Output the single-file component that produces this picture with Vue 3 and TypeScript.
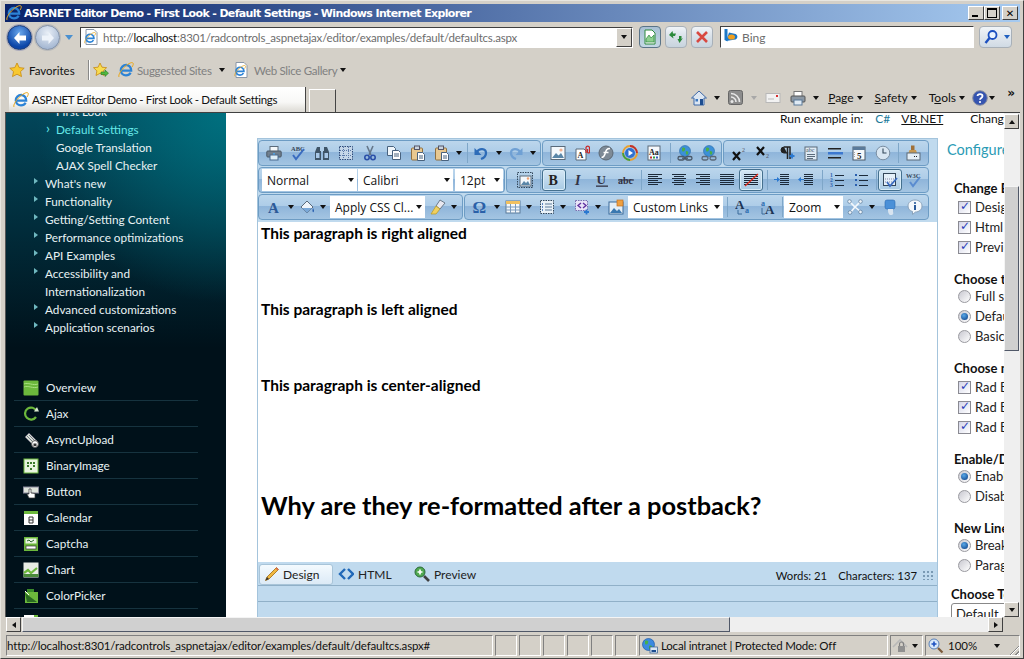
<script setup lang="ts">
// IE8 window showing the RadEditor demo page. Toolbars and lists are data, icons are small inline svgs.
interface Item { i?: string; w?: number; arrow?: boolean; sep?: boolean; gap?: boolean; sel?: string; active?: boolean }
interface Group { w: number; items: Item[] }

const btn = (i: string, w = 24, active = false): Item => ({ i, w, active })
const arrow = (w = 10): Item => ({ arrow: true, w })
const sep = (w: number): Item => ({ sep: true, w })
const gap = (w: number): Item => ({ gap: true, w })
const sel = (text: string, w: number): Item => ({ sel: text, w })

const rows: Group[][] = [
  [
    { w: 283, items: [btn('print'), btn('spell'), btn('find'), btn('selall'), btn('cut'), btn('copy'), btn('paste'), btn('paste'), arrow(), sep(5), btn('undo'), arrow(11), btn('redo'), arrow()] },
    { w: 180, items: [btn('image'), btn('flashdoc'), btn('flash'), btn('media'), btn('docaa'), sep(7), btn('link'), btn('unlink')] },
    { w: 206, items: [btn('sup'), btn('sub'), btn('para'), btn('abcdoc'), btn('hr'), btn('cal'), btn('clock'), sep(6), btn('paint')] },
  ],
  [
    { w: 247, items: [sel('Normal', 95), gap(1), sel('Calibri', 95), gap(2), sel('12pt', 48)] },
    { w: 423, items: [gap(3), btn('imgbox'), sep(5), btn('bold', 24, true), btn('italic'), btn('under'), btn('strike'), sep(5), btn('left'), btn('center'), btn('right'), btn('justify'), btn('noalign', 24, true), sep(7), btn('indent'), btn('outdent'), sep(7), btn('ol'), btn('ul'), sep(5), btn('module', 24, true), btn('w3c')] },
  ],
  [
    { w: 205, items: [gap(2), btn('acolor', 22), arrow(), gap(1), btn('bucket', 20), arrow(11), gap(2), sel('Apply CSS Cl...', 95), gap(1), btn('brush', 23), arrow()] },
    { w: 465, items: [btn('omega'), arrow(), btn('table', 22), arrow(), gap(2), btn('list', 22), arrow(), gap(2), btn('snippet', 23), arrow(), gap(1), btn('imap'), sel('Custom Links', 95), sep(8), btn('shrink'), gap(1), btn('grow'), sep(4), sel('Zoom', 59), gap(2), btn('nodes', 20), gap(2), arrow(), gap(1), btn('monitor'), gap(1), btn('info')] },
  ],
]

const navItems = [
  { text: 'What\'s new' }, { text: 'Functionality' }, { text: 'Getting/Setting Content' },
  { text: 'Performance optimizations' }, { text: 'API Examples' }, { text: 'Accessibility and' },
  { text: 'Internationalization', bare: true }, { text: 'Advanced customizations' }, { text: 'Application scenarios' },
]
const controls = [
  ['Overview', 'overview'], ['Ajax', 'ajax'], ['AsyncUpload', 'upload'], ['BinaryImage', 'binary'], ['Button', 'button'],
  ['Calendar', 'calendar'], ['Captcha', 'captcha'], ['Chart', 'chart'], ['ColorPicker', 'picker'], ['', 'combo'],
]
const config = [
  { title: 'Change Editor', type: 'check', opts: [['Design', true], ['Html', true], ['Preview', true]] },
  { title: 'Choose the', type: 'radio', opts: [['Full set', false], ['Default', true], ['Basic', false]] },
  { title: 'Choose modules', type: 'check', opts: [['Rad Editor', true], ['Rad Editor', true], ['Rad Editor', true]] },
  { title: 'Enable/Disable', type: 'radio', opts: [['Enable', true], ['Disable', false]] },
  { title: 'New Lines', type: 'radio', opts: [['Break', true], ['Paragraph', false]] },
]

const glyph = (t: string, x: number, y: number, size: number, fill: string, extra = ''): string =>
  `<text x="${x}" y="${y}" font-size="${size}" fill="${fill}" font-family="Liberation Serif, serif" ${extra}>${t}</text>`
const lines = (rows: number[][], color = '#1c2a3a'): string =>
  rows.map(([x, y, w]) => `<rect x="${x}" y="${y}" width="${w}" height="1" fill="${color}"/>`).join('')

const ie = '<path d="M3.4 8.6h9.8c.2-3-2-5.6-5-5.6S2.700 5.500 2.800 8.400c.1 3 2.400 5 5.200 5 2 0 3.700-1 4.600-2.600" fill="none" stroke="#2c83d6" stroke-width="2.300"/><path d="M1 15c-1-2 2-7 6-10.500S14 0 15 1c.8.800 0 2.500-1 4" fill="none" stroke="#e8a820" stroke-width="1"/>'

const icons: Record<string, string> = {
  ie,
  iedoc: '<path d="M3 .5h8l3 3v12H3z" fill="#fff" stroke="#8a96a6"/>' + '<g transform="translate(1 3) scale(.75)">' + ie + '</g>',
  star: '<path d="M8 1l2.200 4.600 5 .6-3.700 3.400 1 5L8 12.200 3.500 14.600l1-5L.800 6.200l5-.6z" fill="#f8c830" stroke="#c88a10" stroke-width=".8"/>',
  staradd: '<path d="M7 1l2 4.200 4.600.5-3.400 3.200.9 4.600L7 11.300 3 13.500l.9-4.600L.5 5.700l4.600-.5z" fill="#f8dc50" stroke="#c88a10" stroke-width=".8"/><path d="M8 10h4V8l3.500 3.200L12 14.500v-2H8z" fill="#50b840" stroke="#2a7a20" stroke-width=".6"/>',
  home: '<path d="M8 1L.500 8h2.500v7h10V8h2.500z" fill="#dce6f2" stroke="#3c68a8"/><rect x="9" y="9" width="3" height="6" fill="#1c4c90"/><rect x="4.500" y="9" width="2.500" height="2.500" fill="#3c78c0"/>',
  rss: '<rect x=".5" y=".5" width="14" height="14" rx="2" fill="#8c8c8c" stroke="#666"/><circle cx="4" cy="11.500" r="1.500" fill="#e8e8e8"/><path d="M3 7a5 5 0 015 5M3 3.500A8.500 8.500 0 0111.500 12" fill="none" stroke="#e8e8e8" stroke-width="1.600"/>',
  mail: '<rect x="1" y="3.500" width="14" height="9" fill="#f2f2f2" stroke="#b8b8b8"/><rect x="11" y="5" width="2" height="2" fill="#d83030"/><path d="M3 9h6" stroke="#bbb"/>',
  printer: '<rect x="4" y="1.500" width="8" height="5" fill="#fff" stroke="#777"/><rect x="1" y="6" width="14" height="6" rx="1" fill="#8c98a4" stroke="#555"/><rect x="4" y="10" width="8" height="5" fill="#dfeaf4" stroke="#5b7a9a"/>',
  help: '<circle cx="8" cy="8" r="7.300" fill="#3554b0" stroke="#8a8fa0"/><path d="M5.500 6C5.800 3.500 10.500 3.600 10.500 6c0 2-2.500 1.800-2.500 3.800" fill="none" stroke="#fff" stroke-width="1.800"/><circle cx="8" cy="12" r="1.100" fill="#fff"/>',
  compat: '<path d="M3 1h7l3 3v11H3z" fill="#fff" stroke="#2c8a3c"/><path d="M4 10l3-4 2 3 3-3v7H4z" fill="#8ed08e" stroke="#2c8a3c" stroke-width=".7"/>',
  refresh: '<path d="M1 6l3.500-4 .5 2.500h3L7 7H5l.5 2.500z" fill="#2c8a3c"/><path d="M15 9l-3.500 5-2-4H11V7h2.500v3z" fill="#2c8a3c"/>',
  stop: '<path d="M3 3l10 10M13 3L3 13" stroke="#d84840" stroke-width="2.600"/>',
  bing: '<path d="M1.500 0v11l3 1.500V0z" fill="#1c78c8"/><path d="M3 12l9.500-1.500c2.500-1 2.500-4.500 0-5.500L6 3.500" fill="#1c78c8"/><ellipse cx="8.500" cy="8" rx="3.500" ry="2.600" fill="#f0a020"/>',
  search: '<circle cx="9.500" cy="6" r="4" fill="#eaf4ff" stroke="#1c50c0" stroke-width="1.800"/><path d="M6.500 9L2.500 14" stroke="#1c50c0" stroke-width="2.400"/>',
  lock: '<path d="M1 9l7-7 7 7" fill="none" stroke="#b8b8b8" stroke-width="1.600"/><rect x="6" y="8" width="7" height="6" fill="#909090"/><path d="M7.500 8V6a2 2 0 014 0v2" fill="none" stroke="#808080" stroke-width="1.200"/>',
  zoom: '<circle cx="6" cy="6" r="5" fill="#d8e8fa" stroke="#5880b8"/><path d="M3.500 6h5M6 3.500v5" stroke="#1c50c0" stroke-width="1.600"/><path d="M10 10l4.500 4.500" stroke="#7a5838" stroke-width="2.200"/>',
  globe: '<circle cx="6.500" cy="6.500" r="6" fill="#3c8ae0" stroke="#1c5aa8" stroke-width=".7"/><path d="M3 3c2-1 4 0 3 2S3 7 3 5zM7 8c2-1 4 0 3 1.500S7 12 7 10z" fill="#48b048"/><rect x="8" y="9" width="7.500" height="6" fill="#dce8f4" stroke="#31588c" stroke-width=".7"/><rect x="9.500" y="12" width="4.500" height="2" fill="#1c4c90"/>',
  // editor toolbar
  print: '<rect x="4" y="1.500" width="8" height="5" fill="#f4f8fb" stroke="#5a6a7a"/><rect x=".8" y="6" width="14.400" height="6" rx="1" fill="#717f8e" stroke="#4a5866"/><rect x="4" y="10" width="8" height="5" fill="#dfeef8" stroke="#4a6a90"/><rect x="7" y="8" width="2" height="1.500" fill="#50a0e0"/>',
  spell: glyph('ABC', 1, 6, 6.500, '#36475a', 'font-weight="bold"') + '<path d="M3 10l3 4 8-10" fill="none" stroke="#3a6cc0" stroke-width="2"/>',
  find: '<path d="M3 2h3v4h1v9H1V7zM10 2h3l2 5v8H9V6h1z" fill="#3f5568"/><rect x="2" y="8" width="3.500" height="5" fill="#a8c8e8"/><rect x="10.500" y="8" width="3.500" height="5" fill="#a8c8e8"/>',
  selall: '<rect x="1.500" y="1.500" width="13" height="13" fill="#c4d6e8" stroke="#2e4a78" stroke-dasharray="1.500 1"/><path d="M5.500 2v12M10.500 2v12M2 5.500h12M2 10.500h12" stroke="#5a78a8" stroke-dasharray="1 1"/>',
  cut: '<path d="M5 1l4 9M11 1L7 10" stroke="#65778a" stroke-width="1.600"/><circle cx="5" cy="12.500" r="2.200" fill="none" stroke="#2c50a8" stroke-width="1.600"/><circle cx="11" cy="12.500" r="2.200" fill="none" stroke="#2c50a8" stroke-width="1.600"/>',
  copy: '<path d="M1.500 1.500h6l2 2v7h-8z" fill="#f0f6fb" stroke="#48627e"/><path d="M6.500 5.500h6l2 2v7h-8z" fill="#fff" stroke="#48627e"/><path d="M8 9h5M8 11h5" stroke="#48627e"/>',
  paste: '<rect x="1.500" y="3" width="11" height="12" rx="1" fill="#e8c890" stroke="#907040"/><rect x="4.500" y="1" width="5" height="3.500" fill="#c8d4e0" stroke="#556"/><path d="M7.500 7.500h5l2 2v6h-7z" fill="#fff" stroke="#48627e"/><path d="M9 11h4M9 13h4" stroke="#48627e"/>',
  undo: '<path d="M4 7c2-4 9-4 9 1 0 3-2 5-5 6" fill="none" stroke="#2e6cb8" stroke-width="2.300"/><path d="M1.500 3v7h7z" fill="#2e6cb8"/>',
  redo: '<path d="M12 7C10 3 3 3 3 8c0 3 2 5 5 6" fill="none" stroke="#6fa0d4" stroke-width="2.300"/><path d="M14.500 3v7h-7z" fill="#6fa0d4"/>',
  image: '<rect x="1" y="1.500" width="14" height="13" fill="#f4f8fc" stroke="#5a6a7a"/><path d="M2 13l4-5 2.500 2.500L11 8l3 5z" fill="#5a86a8"/><circle cx="11" cy="5" r="1.600" fill="#f0b090"/>',
  imgbox: '<rect x=".5" y=".5" width="15" height="15" fill="none" stroke="#33475a" stroke-dasharray="1.500 1"/><rect x="3" y="4" width="11" height="10" fill="#f4f8fc" stroke="#5a6a7a"/><path d="M4 13l3-4 2 2 2-2 2 4z" fill="#5a86a8"/><circle cx="11" cy="6.500" r="1.200" fill="#f0a070"/>',
  flashdoc: '<path d="M2 4h8l2 2v9H2z" fill="#fff" stroke="#5a6a7a"/>' + glyph('A', 3.500, 13, 8, '#222', 'font-weight="bold"') + '<path d="M12 8V2.500a1.800 1.800 0 013.500 0V7a1 1 0 01-2 0V4" fill="none" stroke="#c82828" stroke-width="1.200"/>',
  flash: '<circle cx="8" cy="8" r="7" fill="#7e8a96" stroke="#5c6874"/><path d="M12 3.500C8 3.500 8 6 7 9s-2 3.500-3.500 3.500M5.500 7.500h5" fill="none" stroke="#fff" stroke-width="1.500"/>',
  media: '<circle cx="8" cy="8" r="7" fill="none" stroke="#e8a030" stroke-width="1.800"/><path d="M8 1a7 7 0 017 7" fill="none" stroke="#c03030" stroke-width="1.800"/><path d="M8 15a7 7 0 01-7-7" fill="none" stroke="#40a040" stroke-width="1.800"/><circle cx="8" cy="8" r="5" fill="#3070d0"/><path d="M6.500 5l4.500 3-4.500 3z" fill="#fff"/>',
  docaa: '<rect x="2" y="1" width="12" height="14" fill="#f6f8fb" stroke="#5a6a7a"/>' + glyph('Aa', 3, 9.500, 8, '#222', 'font-weight="bold"') + '<path d="M4 12.500h2" stroke="#c03030" stroke-width="2"/><path d="M7 12.500h2" stroke="#30a040" stroke-width="2"/><path d="M10 12.500h2" stroke="#3060c0" stroke-width="2"/>',
  link: '<circle cx="8" cy="6" r="5.500" fill="#3c90d8" stroke="#2a6aa8" stroke-width=".6"/><path d="M5 3c2-1 4 0 3 2S5 7 5 5zM9 6c2 0 3 1 2 3s-3 0-2-3z" fill="#4cac48"/><rect x="1" y="11.500" width="6.500" height="3.500" rx="1.700" fill="none" stroke="#4a5868" stroke-width="1.300"/><rect x="8.500" y="11.500" width="6.500" height="3.500" rx="1.700" fill="none" stroke="#4a5868" stroke-width="1.300"/><path d="M5 13.200h6" stroke="#4a5868" stroke-width="1.300"/>',
  unlink: '<circle cx="8" cy="6" r="5.500" fill="#3c90d8" stroke="#2a6aa8" stroke-width=".6"/><path d="M5 3c2-1 4 0 3 2S5 7 5 5zM9 6c2 0 3 1 2 3s-3 0-2-3z" fill="#4cac48"/><rect x="1" y="11.500" width="6" height="3.500" rx="1.700" fill="none" stroke="#5a6878" stroke-width="1.300"/><rect x="9" y="11.500" width="6" height="3.500" rx="1.700" fill="none" stroke="#5a6878" stroke-width="1.300"/>',
  sup: '<path d="M2 7l7 8M9 7l-7 8" stroke="#111" stroke-width="2.200"/>' + glyph('2', 11, 7, 6, '#556'),
  sub: '<path d="M2 2l7 8M9 2l-7 8" stroke="#111" stroke-width="2.200"/>' + glyph('2', 11, 13, 6, '#556'),
  para: '<path d="M5 2h6v12M8.500 2v12" fill="none" stroke="#222" stroke-width="1.500"/><path d="M5 2a3 3 0 000 6h3" fill="#222" stroke="#222"/><path d="M10.500 11h5M13 8.500v5" stroke="#2a78d0" stroke-width="1.800"/>',
  abcdoc: '<rect x="2" y="2" width="12" height="13" fill="#dfeaf4" stroke="#5a6a7a"/>' + glyph('abc', 3, 7, 6, '#3a4a60') + '<path d="M4 9.500h8M4 11.500h8M4 13.500h6" stroke="#5a6a7a"/>',
  hr: '<rect x="1" y="3" width="13" height="1.500" fill="#222"/><rect x="1" y="7" width="15" height="2.500" fill="#3c78d0"/><rect x="1" y="12" width="13" height="1.500" fill="#222"/>',
  cal: '<rect x="2" y="2" width="12" height="13" fill="#f4f8fb" stroke="#4a5a6a"/><rect x="2" y="2" width="12" height="3" fill="#5a7a9a"/>' + glyph('5', 6, 13.500, 9, '#222', 'font-weight="bold"') + '<path d="M3.500 7v6" stroke="#aaa" stroke-dasharray="1 1"/>',
  clock: '<circle cx="8" cy="8" r="6.800" fill="#d8e6f2" stroke="#7a8ea2"/><path d="M8 3.500V8h3.500" fill="none" stroke="#33475a" stroke-width="1.100"/>',
  paint: '<rect x="6" y=".5" width="3.500" height="5" fill="#a07038"/><path d="M4.500 5h6.500l1 3H3.500z" fill="#c89850"/><rect x="2" y="8" width="13" height="7" fill="#e4eef6" stroke="#5a6a7a"/><path d="M9 11.500h4" stroke="#222" stroke-dasharray="1 1"/>',
  bold: glyph('B', 2.500, 13, 14, '#222', 'font-weight="bold"'),
  italic: glyph('I', 5, 13, 14, '#334', 'font-style="italic" font-weight="bold"'),
  under: glyph('U', 2.500, 12, 13, '#334', 'font-weight="bold"') + '<rect x="2" y="13.500" width="12" height="1.300" fill="#334"/>',
  strike: glyph('abc', 0, 11.500, 10, '#334', 'font-weight="bold"') + '<rect x="0" y="7.500" width="16" height="1" fill="#334"/>',
  left: lines([[1, 2, 14], [1, 4, 10], [1, 6, 14], [1, 8, 10], [1, 10, 14], [1, 12, 10]]),
  center: lines([[1, 2, 14], [3, 4, 10], [1, 6, 14], [3, 8, 10], [1, 10, 14], [3, 12, 10]]),
  right: lines([[1, 2, 14], [5, 4, 10], [1, 6, 14], [5, 8, 10], [1, 10, 14], [5, 12, 10]]),
  justify: lines([[1, 2, 14], [1, 4, 14], [1, 6, 14], [1, 8, 14], [1, 10, 14], [1, 12, 14]]),
  noalign: lines([[1, 2, 14], [1, 4, 14], [1, 6, 14], [1, 8, 14], [1, 10, 14], [1, 12, 14]]) + '<path d="M2 14L15 2" stroke="#e02818" stroke-width="1.300"/>',
  indent: lines([[6, 2, 9], [6, 4, 9], [6, 6, 9], [6, 8, 9], [6, 10, 9], [6, 12, 9]]) + '<path d="M0 7h3V5l3 2.500L3 10V8H0z" fill="#2a78d0"/>',
  outdent: lines([[6, 2, 9], [6, 4, 9], [6, 6, 9], [6, 8, 9], [6, 10, 9], [6, 12, 9]]) + '<path d="M6 7H3V5L0 7.500 3 10V8h3z" fill="#2a78d0"/>',
  ol: glyph('1', 1, 5, 5.500, '#2a60b0', 'font-weight="bold"') + glyph('2', 1, 10, 5.500, '#2a60b0', 'font-weight="bold"') + glyph('3', 1, 15, 5.500, '#2a60b0', 'font-weight="bold"') + lines([[6, 3, 9], [6, 8, 9], [6, 13, 9]]),
  ul: '<path d="M2 2h2v2H2zM2 7h2v2H2zM2 12h2v2H2z" fill="#2a60b0"/>' + lines([[6, 3, 9], [6, 8, 9], [6, 13, 9]]),
  module: '<rect x="1.500" y="1.500" width="12" height="12" fill="#e4f0fa" stroke="#33475a"/><path d="M3 10h9M3 7h9" stroke="#88a" stroke-dasharray="1 1"/><path d="M5 10l3 4 7-8" fill="none" stroke="#3a6cc0" stroke-width="1.800"/>',
  w3c: glyph('W3C', 0, 6, 6.500, '#36475a', 'font-weight="bold"') + '<path d="M4 10l3 4 7-9" fill="none" stroke="#5a8cd0" stroke-width="2"/>',
  acolor: glyph('A', 1, 13.500, 15, '#2c5a98', 'font-weight="bold"'),
  bucket: '<path d="M2 8l6-6 6 6-6 6z" fill="#eef4fa" stroke="#5a6a7a"/><path d="M3 9h10l-5 5z" fill="#7aa8d8"/><path d="M14 9c1 2 1.500 3 .5 4s-1.500-2-.5-4z" fill="#2a60b0"/>',
  brush: '<path d="M10 1l5 3-5 6-4-3z" fill="#e8e8f0" stroke="#6a7a8a"/><path d="M6 7l4 3-4 5H1z" fill="#f0d060" stroke="#b89820" stroke-width=".7"/>',
  omega: glyph('Ω', 0.500, 14, 17, '#2a60a8', 'font-weight="bold"'),
  table: '<rect x="1" y="2" width="14" height="12" fill="#f4f8fb" stroke="#5a7a9a"/><rect x="1" y="2" width="14" height="3" fill="#f0c060"/><path d="M1 8h14M1 11h14M5.500 5v9M10.500 5v9" stroke="#7a9abc"/>',
  list: '<rect x="1.500" y="1.500" width="13" height="13" fill="#eaf2f8" stroke="#33475a" stroke-dasharray="1.500 1"/><path d="M3 5h1M3 8h1M3 11h1" stroke="#2a60b0" stroke-width="1.500"/><path d="M6 5h7M6 8h7M6 11h7" stroke="#5a7a9a"/>',
  snippet: '<rect x="1.500" y="1.500" width="12" height="10" fill="#e8e4f8" stroke="#7a70b0" stroke-dasharray="1.500 1"/><path d="M7 4L4 6.500 7 9M9 4l3 2.500L9 9" fill="none" stroke="#6030a0" stroke-width="1.400"/><path d="M10 13h5M12.500 10.500v5" stroke="#2a78d0" stroke-width="1.800"/>',
  imap: '<rect x="1" y="3" width="14" height="12" fill="#e4eef6" stroke="#3a6a9a"/><path d="M2 14l4-5 3 3 2-2 3 4z" fill="#3a78b0"/><rect x="9" y="1" width="6" height="6" fill="#f0a040" stroke="#c07020" stroke-width=".7"/>',
  shrink: glyph('A', 0, 10, 13, '#1c3454', 'font-weight="bold"') + glyph('a', 10, 14, 8, '#2c6cb0', 'font-weight="bold"') + '<path d="M3 11v4h4" fill="none" stroke="#3a6a9a"/>',
  grow: glyph('a', 1, 7, 8, '#2c6cb0', 'font-weight="bold"') + glyph('A', 5, 15, 13, '#1c3454', 'font-weight="bold"') + '<path d="M2 9v6h3" fill="none" stroke="#3a6a9a"/>',
  nodes: '<path d="M2 2l6 6 6-6M8 8l-5 6M8 8l6 5" fill="none" stroke="#f4f8fc" stroke-width="1.600"/><circle cx="2.500" cy="2.500" r="1.800" fill="#eef4fa" stroke="#5a7a9a" stroke-width=".7"/><circle cx="13.500" cy="2.500" r="1.800" fill="#eef4fa" stroke="#5a7a9a" stroke-width=".7"/><circle cx="3" cy="13.500" r="1.800" fill="#eef4fa" stroke="#5a7a9a" stroke-width=".7"/><circle cx="13.500" cy="13" r="1.800" fill="#eef4fa" stroke="#5a7a9a" stroke-width=".7"/>',
  monitor: '<rect x="3" y="1" width="10" height="9" rx="2" fill="#4a90d8" stroke="#2a68b0" stroke-width=".6"/><path d="M6 10h5v3a2 2 0 01-4 2c-1-1-1-3-1-5z" fill="#d8e4f0"/>',
  info: '<path d="M8 1c4 0 7 2.500 7 6s-3 6-6.500 6l-3 2.500V12.500C3 12 1 10 1 7c0-3.500 3-6 7-6z" fill="#f4f8fc" stroke="#8aa2ba"/><circle cx="8" cy="4" r="1.100" fill="#2a5a9a"/><rect x="7" y="6" width="2" height="5" fill="#2a5a9a"/>',
  // footer tabs
  pencil: '<path d="M12.500 1.500l2 2L5 13 1.500 14.500 3 11z" fill="#f0b840" stroke="#a06a10" stroke-width=".8"/><path d="M11.500 2.500l2 2 1-1-2-2z" fill="#e06850"/><path d="M3 11l2 2-3.500 1.500z" fill="#333"/>',
  html: '<path d="M7 3L2 8l5 5M10 3l5 5-5 5" fill="none" stroke="#2068b8" stroke-width="2.400"/>',
  preview: '<circle cx="6" cy="6" r="5" fill="#50a850" stroke="#2a6a3a"/><path d="M3.500 6h5M6 3.500v5" stroke="#fff" stroke-width="1.700"/><path d="M10 10l5 5" stroke="#404040" stroke-width="2.600"/>',
  // product list
  overview: '<rect x=".5" y=".5" width="15" height="15" rx="1" fill="#6cb83c"/><path d="M1 4c4-2 9 2 14 0M1 7c4-2 9 2 14 0" fill="none" stroke="#a8e080"/>',
  ajax: '<path d="M13 11A6 6 0 1113.500 5" fill="none" stroke="#6cb83c" stroke-width="2.200"/><path d="M11 5.500h5L14 1z" fill="#d8e8d0"/>',
  upload: '<path d="M2 5L6 1l9 9-4 4z" fill="#d8e0d4" stroke="#667"/><path d="M4 4l8 8M6 3l8 8" stroke="#778"/><circle cx="12" cy="12" r="3.400" fill="#fff" stroke="#555"/><rect x="10.500" y="11.500" width="3" height="2.500" fill="#333"/>',
  binary: '<rect x="1" y="1" width="14" height="14" fill="#e8f4e0" stroke="#6cb83c"/><path d="M4 4h2v2H4zM7 4h2v2H7zM10 4h2v2h-2zM4 7h2v2H4zM10 7h2v2h-2zM7 10h2v2H7z" fill="#3a7a2c"/>',
  button: '<rect x=".5" y="3" width="15" height="6" fill="#dfe4dc" stroke="#889"/><path d="M6 5h2v4l4 .5V14H6L4 10h2z" fill="#fff" stroke="#333" stroke-width=".7"/>',
  calendar: '<rect x="1" y="3" width="14" height="12" fill="#fff"/><rect x="1" y="1" width="14" height="3" fill="#6cb83c"/>' + '<path d="M6 7h4v6H6z" fill="none" stroke="#333"/><path d="M6 10h4" stroke="#333"/>',
  captcha: '<rect x="1" y="1" width="14" height="14" fill="#6cb83c"/><rect x="2.500" y="2.500" width="11" height="5" fill="#e8f4e0"/><path d="M4 5l2-1 2 2 3-2" fill="none" stroke="#2a6a2a"/><rect x="3" y="10" width="10" height="3" fill="#fff" stroke="#333" stroke-width=".7"/>',
  chart: '<rect x=".5" y=".5" width="15" height="15" fill="#e8ece4"/><path d="M1 11l4-3 3 3 6-5" fill="none" stroke="#6cb83c" stroke-width="2.200"/><rect x=".5" y="12" width="15" height="3" fill="#4a8a3a"/>',
  picker: '<path d="M2 4h13v11H2z" fill="#6cb83c"/><path d="M4 4V1h7v3" fill="#3a8a2a"/><path d="M2 5l12 9H4z" fill="#2a6a22"/><path d="M2 3l4 4" stroke="#fff"/>',
  combo: '<rect x="1" y="1" width="14" height="8" fill="#fff"/><rect x="11" y="1" width="4" height="4" fill="#6cb83c"/>',
}
</script>

<template>
  <div class="window">
    <div class="titlebar">
      <svg class="ic title-ie" viewBox="0 0 16 16" v-html="icons.ie"></svg>
      <span class="title-text">ASP.NET Editor Demo - First Look - Default Settings - Windows Internet Explorer</span>
      <div class="caption">
        <button class="cap"><span class="cap-min"></span></button>
        <button class="cap"><span class="cap-max"></span></button>
        <button class="cap cap-x">✕</button>
      </div>
    </div>

    <div class="navbar">
      <div class="orb orb-back"><svg viewBox="0 0 16 16"><path d="M7.500 2L2 8l5.500 6V10.500H14v-5H7.500z" fill="#fff"/></svg></div>
      <div class="orb orb-fwd"><svg viewBox="0 0 16 16"><path d="M8.500 2L14 8l-5.500 6V10.500H2v-5h6.500z" fill="#eef3fa"/></svg></div>
      <span class="nav-drop"></span>
      <div class="address">
        <svg class="ic addr-ie" viewBox="0 0 16 16" v-html="icons.iedoc"></svg>
        <span class="addr-text">http://<b>localhost</b>:8301/radcontrols_aspnetajax/editor/examples/default/defaultcs.aspx</span>
        <span class="combo-btn"><i class="tri"></i></span>
      </div>
      <button class="glass glass-on"><svg class="ic" viewBox="0 0 16 16" v-html="icons.compat"></svg></button>
      <button class="glass"><svg class="ic" viewBox="0 0 16 16" v-html="icons.refresh"></svg></button>
      <button class="glass"><svg class="ic" viewBox="0 0 16 16" v-html="icons.stop"></svg></button>
      <div class="searchbox">
        <svg class="ic" viewBox="0 0 16 16" v-html="icons.bing"></svg>
        <span>Bing</span>
      </div>
      <div class="search-btn">
        <svg class="ic" viewBox="0 0 16 16" v-html="icons.search"></svg>
        <i class="tri tri-blue"></i>
      </div>
    </div>

    <div class="favbar">
      <svg class="ic" viewBox="0 0 16 16" v-html="icons.star"></svg>
      <span class="fav-label">Favorites</span>
      <span class="fav-sep"></span>
      <svg class="ic" viewBox="0 0 16 16" v-html="icons.staradd"></svg>
      <svg class="ic fav-ie" viewBox="0 0 16 16" v-html="icons.ie"></svg>
      <span class="fav-link fav-suggested">Suggested Sites</span>
      <i class="tri fav-tri"></i>
      <svg class="ic fav-doc" viewBox="0 0 16 16" v-html="icons.iedoc"></svg>
      <span class="fav-link fav-slice">Web Slice Gallery</span>
      <i class="tri fav-tri2"></i>
    </div>

    <div class="tabbar">
      <div class="tab">
        <svg class="ic" viewBox="0 0 16 16" v-html="icons.ie"></svg>
        <span>ASP.NET Editor Demo - First Look - Default Settings</span>
      </div>
      <div class="newtab"></div>
      <div class="cmd">
        <svg class="ic" viewBox="0 0 16 16" v-html="icons.home"></svg><i class="tri cmd-tri"></i>
        <svg class="ic rss" viewBox="0 0 16 16" v-html="icons.rss"></svg><i class="tri cmd-tri faded"></i>
        <svg class="ic mail" viewBox="0 0 16 16" v-html="icons.mail"></svg>
        <svg class="ic" viewBox="0 0 16 16" v-html="icons.printer"></svg><i class="tri cmd-tri"></i>
        <span class="cmd-item cmd-page"><u>P</u>age</span><i class="tri txt-tri"></i>
        <span class="cmd-item"><u>S</u>afety</span><i class="tri txt-tri"></i>
        <span class="cmd-item">T<u>o</u>ols</span><i class="tri txt-tri"></i>
        <svg class="ic cmd-help" viewBox="0 0 16 16" v-html="icons.help"></svg><i class="tri cmd-tri cmd-tri-h"></i>
        <span class="cmd-more">»</span>
      </div>
    </div>

    <div class="viewport">
      <div class="view-top">
        <aside class="sidebar">
          <ul class="nav">
            <li class="nav-sub">First Look</li>
            <li class="nav-sub nav-on"><span class="chev">›</span>Default Settings</li>
            <li class="nav-sub">Google Translation</li>
            <li class="nav-sub">AJAX Spell Checker</li>
            <li v-for="n in navItems" :key="n.text" class="nav-top">
              <i v-if="!n.bare" class="nav-tri"></i>{{ n.text }}
            </li>
          </ul>
          <ul class="products">
            <li v-for="c in controls" :key="c[1]" class="product">
              <svg class="ic" viewBox="0 0 16 16" v-html="icons[c[1]]"></svg>
              <span>{{ c[0] }}</span>
            </li>
          </ul>
        </aside>

        <main class="page">
          <div class="runline">
            <span>Run example in:</span>
            <a class="lang-on">C#</a>
            <a class="lang">VB.NET</a>
            <span class="change">Change</span>
          </div>
          <div class="split">
            <section class="editor">
              <div class="tools">
                <div v-for="(row, r) in rows" :key="r" class="tool-row">
                  <div v-for="(g, gi) in row" :key="gi" class="tool-group" :style="{ width: g.w + 'px' }">
                    <template v-for="(it, k) in g.items" :key="k">
                      <span v-if="it.sel" class="t-select" :style="{ width: it.w + 'px' }">
                        <span>{{ it.sel }}</span><i class="tri"></i>
                      </span>
                      <span v-else-if="it.arrow" class="t-arrow" :style="{ width: it.w + 'px' }"><i class="tri"></i></span>
                      <span v-else-if="it.sep" class="t-sep" :style="{ width: it.w + 'px' }"></span>
                      <span v-else-if="it.gap" :style="{ width: it.w + 'px' }"></span>
                      <span v-else class="t-btn" :class="{ active: it.active }" :style="{ width: it.w + 'px' }">
                        <svg class="ic" viewBox="0 0 16 16" v-html="icons[it.i!]"></svg>
                      </span>
                    </template>
                  </div>
                </div>
              </div>
              <div class="content">
                <p>This paragraph is right aligned</p>
                <p>This paragraph is left aligned</p>
                <p>This paragraph is center-aligned</p>
                <h1>Why are they re-formatted after a postback?</h1>
              </div>
              <div class="modes">
                <div class="mode mode-on"><svg class="ic" viewBox="0 0 16 16" v-html="icons.pencil"></svg>Design</div>
                <div class="mode mode-html"><svg class="ic" viewBox="0 0 16 16" v-html="icons.html"></svg>HTML</div>
                <div class="mode mode-prev"><svg class="ic" viewBox="0 0 16 16" v-html="icons.preview"></svg>Preview</div>
                <div class="stats"><span>Words: 21</span><span>Characters: 137</span></div>
                <span class="grip"></span>
              </div>
              <div class="editor-strip"></div>
              <div class="editor-tail"></div>
            </section>

            <section class="config">
              <div class="config-title">Configure</div>
              <div v-for="s in config" :key="s.title" class="cfg-section">
                <div class="cfg-head">{{ s.title }}</div>
                <div class="cfg-list" :class="s.type">
                  <div v-for="(o, oi) in s.opts" :key="oi" class="cfg-row">
                    <span :class="[s.type === 'check' ? 'cb' : 'rb', { on: o[1] }]"></span>{{ o[0] }}
                  </div>
                </div>
              </div>
              <div class="cfg-head cfg-last">Choose Tools</div>
              <div class="cfg-select">Default</div>
            </section>
          </div>
        </main>

        <div class="vscroll">
          <span class="sb-btn"><i class="tri tri-up"></i></span>
          <span class="sb-thumb"></span>
          <span class="sb-btn sb-end"><i class="tri"></i></span>
        </div>
      </div>
      <div class="hscroll">
        <span class="sb-btn"><i class="tri tri-left"></i></span>
        <span class="hs-thumb"></span>
        <span class="hs-track"></span>
        <span class="sb-btn"><i class="tri tri-right"></i></span>
        <span class="corner"></span>
      </div>
    </div>

    <footer class="status">
      <div class="st-main">http://localhost:8301/radcontrols_aspnetajax/editor/examples/default/defaultcs.aspx#</div>
      <div v-for="n in 6" :key="n" class="st-cell"></div>
      <div class="st-zone">
        <svg class="ic" viewBox="0 0 16 16" v-html="icons.globe"></svg>
        <span>Local intranet | Protected Mode: Off</span>
      </div>
      <div class="st-lock"><svg class="ic" viewBox="0 0 16 16" v-html="icons.lock"></svg><i class="tri"></i></div>
      <div class="st-zoom"><svg class="ic" viewBox="0 0 16 16" v-html="icons.zoom"></svg><span>100%</span><i class="tri"></i><span class="st-grip"></span></div>
    </footer>
  </div>
</template>

<style scoped>
.window { width: 1024px; height: 659px; box-sizing: border-box; padding: 3px 3px 2px 4px; background: #d4d0c8; display: flex; flex-direction: column; overflow: hidden; border: 1px solid; border-color: #e8e6e0 #404040 #404040 #e8e6e0; font-family: Lato, "Noto Sans", sans-serif; font-size: 12px; color: #111; }
.ic { width: 16px; height: 16px; flex: none; display: block; }
.tri { display: inline-block; width: 0; height: 0; border: 3px solid transparent; border-top: 4px solid #111; border-bottom: 0; flex: none; }

.titlebar { height: 18px; flex: none; display: flex; align-items: center; background: linear-gradient(90deg, #0a246a, #a6caf0); color: #fff; font: bold 11px "DejaVu Sans", sans-serif; letter-spacing: -0.640px; }
.title-ie { margin: 0 2px 0 1px; }
.title-text { white-space: nowrap; }
.caption { margin-left: auto; display: flex; margin-right: 2px; }
.cap { width: 16px; height: 14px; padding: 0; margin-left: 0; background: #d4d0c8; border: 1px solid; border-color: #fff #404040 #404040 #fff; position: relative; font: bold 10px "DejaVu Sans", sans-serif; color: #000; line-height: 11px; }
.cap-x { margin-left: 2px; }
.cap-min { position: absolute; left: 3px; bottom: 2px; width: 6px; height: 2px; background: #000; }
.cap-max { position: absolute; left: 2px; top: 1px; width: 8px; height: 7px; border: 1px solid #000; border-top-width: 2px; }

.navbar { height: 30px; flex: none; display: flex; align-items: center; padding-left: 2px; }
.orb { width: 25px; height: 25px; border-radius: 50%; box-sizing: border-box; padding: 4px; flex: none; }
.orb svg { display: block; width: 16px; height: 16px; }
.orb-back { background: radial-gradient(circle at 50% 30%, #6aa8ec, #0c46a8 70%); border: 1px solid #1c3c78; box-shadow: 0 0 0 1px #aab; }
.orb-fwd { margin-left: 3px; background: radial-gradient(circle at 50% 30%, #e8eef6, #a8bad4 75%); border: 1px solid #8090a8; box-shadow: 0 0 0 1px #bbb; }
.nav-drop { width: 0; height: 0; margin: 0 7px 0 5px; border: 4px solid transparent; border-top: 5px solid #4a90d0; border-bottom: 0; flex: none; }
.address { width: 553px; height: 21px; background: #fff; box-sizing: border-box; border: 1px solid; border-color: #404040 #fff #fff #404040; display: flex; align-items: center; flex: none; font-size: 11.500px; color: #6d6d6d; }
.addr-ie { margin: 0 4px 0 2px; }
.addr-text { white-space: nowrap; letter-spacing: -0.180px; padding-top: 1px; }
.addr-text b { font-weight: 400; color: #111; }
.combo-btn { margin-left: auto; width: 16px; height: 19px; background: #d4d0c8; border: 1px solid; box-sizing: border-box; border-color: #fff #404040 #404040 #fff; display: flex; align-items: center; justify-content: center; }
.glass { width: 22px; height: 22px; margin-left: 4px; padding: 2px; border: 1px solid #a8b0b8; border-radius: 4px; background: linear-gradient(#f0f4f8, #d8e0e8 50%, #c8d4de); flex: none; box-sizing: border-box; }
.glass-on { margin-left: 6px; background: linear-gradient(#a8c0d4, #c4d8e4); border-color: #5a7488; }
.searchbox { width: 254px; height: 22px; margin-left: 7px; background: #fff; box-sizing: border-box; border: 1px solid; border-color: #404040 #fff #fff #404040; display: flex; align-items: center; gap: 3px; padding-left: 2px; color: #6d6d6d; flex: none; }
.searchbox span { padding-top: 1px; }
.search-btn { width: 33px; height: 22px; margin-left: 5px; border: 1px solid #a8b0b8; border-radius: 4px; box-sizing: border-box; background: linear-gradient(#f0f4f8, #d0dae4); display: flex; align-items: center; padding-left: 3px; gap: 4px; }
.tri-blue { border-top-color: #2060c0; margin-left: 1px; }

.favbar { height: 34px; flex: none; display: flex; align-items: center; padding: 2px 0 0 4px; box-sizing: border-box; font-size: 11.500px; }
.fav-label { margin-left: 4px; width: 45px; white-space: nowrap; }
.fav-sep { width: 1px; height: 20px; margin: 0 4px 0 14px; background: #888; box-shadow: 1px 0 #fff; }
.fav-ie { margin-left: 9px; }
.fav-link { color: #808080; white-space: nowrap; margin-left: 3px; letter-spacing: -0.300px; }
.fav-suggested { width: 77px; }
.fav-tri { margin-left: 5px; }
.fav-doc { margin-left: 8px; }
.fav-slice { margin-left: 5px; width: 81px; }
.fav-tri2 { margin-left: 5px; }

.tabbar { height: 26px; flex: none; display: flex; align-items: flex-end; padding-left: 4px; }
.tab { width: 297px; height: 25px; box-sizing: border-box; padding-left: 4px; display: flex; align-items: center; gap: 3px; background: linear-gradient(#fff, #f8f8f6 60%, #dcdad4); border-right: 1px solid #444; white-space: nowrap; font-size: 11.500px; letter-spacing: -0.340px; }
.newtab { width: 27px; height: 23px; margin-left: 3px; border: 1px solid; border-bottom: 0; border-color: #fff #444 transparent #fff; box-sizing: border-box; }
.cmd { margin-left: auto; height: 26px; display: flex; align-items: center; position: relative; padding-right: 25px; padding-bottom: 3px; box-sizing: border-box; }
.cmd-tri { margin: 0 0 0 7px; }
.txt-tri { margin-left: 3px; }
.rss { margin-left: 8px; }
.faded { border-top-color: #a8a8a8; }
.mail { margin: 0 9px 0 8px; }
.cmd-item { margin-left: 12px; white-space: nowrap; }
.cmd-page { margin-left: 9px; }
.cmd-help { margin-left: 7px; }
.cmd-tri-h { margin-left: 1px; }
.cmd-more { position: absolute; right: 5px; top: 0; font: bold 12px "DejaVu Sans", sans-serif; }

.viewport { flex: 1; min-height: 0; display: flex; flex-direction: column; border-top: 1px solid #404040; }
.view-top { flex: 1; min-height: 0; display: flex; }

.sidebar { width: 220px; flex: none; overflow: hidden; border-left: 1px solid #555; background: radial-gradient(circle 190px at 100% 0, #00707f, rgba(0, 70, 90, 0) 100%), linear-gradient(#02465a, #00111a 235px); color: #e8f2f4; font: 11.750px Lato, sans-serif; }
.nav { list-style: none; margin: -10px 0 0; padding: 0; }
.nav li { height: 18px; line-height: 18px; white-space: nowrap; position: relative; }
.nav-sub { padding-left: 50px; }
.nav-top { padding-left: 39px; }
.nav-on { color: #66e8e8; }
.chev { position: absolute; left: 40px; top: -2px; font-size: 14px; }
.nav-tri { position: absolute; left: 28px; top: 3px; width: 0; height: 0; border: 3px solid transparent; border-left: 4px solid #6fb8c0; border-right: 0; }
.products { list-style: none; margin: 38px 0 0; padding: 0 0 0 8px; width: 184px; }
.product { height: 25px; border-bottom: 1px solid #16333f; display: flex; align-items: center; gap: 7px; padding-left: 9px; white-space: nowrap; }

.page { flex: 1; min-width: 0; background: #fff; overflow: hidden; padding-left: 31px; display: flex; flex-direction: column; }
.runline { height: 25px; flex: none; display: flex; align-items: flex-start; padding-left: 523px; white-space: nowrap; font-size: 12px; line-height: 11px; overflow: hidden; }
.lang-on { margin-left: 12px; color: #1c7a9a; }
.lang { margin-left: 11px; text-decoration: underline; }
.change { margin-left: 27px; }
.split { flex: 1; min-height: 0; display: flex; }

.editor { width: 681px; flex: none; box-sizing: border-box; height: 100%; border: 1px solid #a4c4dc; border-width: 1px 1px 0; background: #c0daee; display: flex; flex-direction: column; padding-top: 1px; }
.tools { display: flex; flex-direction: column; gap: 1px; flex: none; }
.tool-row { display: flex; gap: 1px; height: 26px; }
.tool-group { height: 26px; box-sizing: border-box; display: flex; align-items: center; padding-left: 3px; border: 1px solid #6d9cc4; border-radius: 4px; background: linear-gradient(#bcd6ec, #aecde8 44%, #8fb5da 48%, #a4c5e2); }
.t-btn { height: 22px; display: flex; align-items: center; justify-content: center; flex: none; box-sizing: border-box; }
.t-btn.active { border: 1px solid #45708e; border-radius: 3px; background: linear-gradient(#d4e6f4, #a8cae4); box-shadow: inset 0 0 0 1px #d8ecf8; }
.t-arrow { display: flex; align-items: center; justify-content: center; flex: none; }
.t-sep { height: 20px; flex: none; position: relative; }
.t-sep::after { content: ""; position: absolute; left: 50%; top: 0; bottom: 0; width: 1px; background: #7ea6c8; }
.t-select { height: 22px; background: #fff; flex: none; box-sizing: border-box; display: flex; align-items: center; justify-content: space-between; padding: 0 3px 0 5px; font: 12px "Open Sans", sans-serif; white-space: nowrap; overflow: hidden; }
.content { height: 340px; flex: none; margin-top: 2px; background: #fff; padding: 1px 3px 0; box-sizing: border-box; font-family: Lato, sans-serif; overflow: hidden; color: #000; }
.content p { margin: 0 0 56px; font-size: 15.500px; font-weight: 700; line-height: 20px; }
.content h1 { margin: 92px 0 0; font-size: 25.400px; font-weight: 700; line-height: 36px; }
.modes { height: 24px; flex: none; display: flex; align-items: center; position: relative; border-bottom: 1px solid #90b0c8; font-size: 12px; box-sizing: border-box; padding-top: 1px; }
.mode { display: flex; align-items: center; gap: 4px; white-space: nowrap; color: #222; }
.mode-on { margin-left: 1px; width: 74px; height: 21px; box-sizing: border-box; padding-left: 4px; gap: 3px; border: 1px solid #a8c4d8; border-radius: 3px; background: linear-gradient(#f4fafe, #dceaf6); }
.mode-html { margin-left: 5px; width: 76px; }
.stats { margin-left: auto; display: flex; gap: 11px; margin-right: 20px; font-size: 11.300px; padding-top: 2px; }
.grip { position: absolute; right: 2px; top: 8px; width: 13px; height: 10px; background: radial-gradient(circle, #7a9ab4 1px, transparent 1.200px) 0 0 / 4px 4px; }
.editor-strip { height: 16px; flex: none; border-bottom: 1px solid #90b0c8; box-sizing: border-box; }
.editor-tail { flex: 1; }

.config { flex: 1; min-width: 0; overflow: hidden; padding: 2px 0 0 9px; font: 13px Lato, sans-serif; color: #222; white-space: nowrap; }
.config-title { height: 20px; line-height: 20px; font-size: 14.500px; color: #2a9bb5; margin-bottom: 19px; }
.cfg-section { margin-left: 7px; margin-bottom: 13px; }
.cfg-head { height: 18px; line-height: 18px; font-weight: 700; color: #111; }
.cfg-list.radio { margin-top: -2px; }
.cfg-row { height: 20px; display: flex; align-items: center; gap: 4px; margin-left: 4px; }
.cb { width: 13px; height: 13px; flex: none; box-sizing: border-box; border: 1px solid #8a8a92; background: linear-gradient(135deg, #d4d6e8, #fff); position: relative; }
.cb.on::after { content: "✓"; position: absolute; left: 1px; top: -3px; color: #2a40b8; font: bold 12px "DejaVu Sans", sans-serif; }
.rb { width: 13px; height: 13px; flex: none; box-sizing: border-box; border-radius: 50%; border: 1px solid #9a9aa0; background: linear-gradient(135deg, #c8c8d0, #fff); position: relative; }
.rb.on::after { content: ""; position: absolute; inset: 2px; border-radius: 50%; background: radial-gradient(circle at 40% 35%, #58a8e8, #0a3a80); }
.cfg-last { margin: -3px 0 0 4px; }
.cfg-select { margin: 0 0 0 4px; width: 60px; height: 24px; box-sizing: border-box; border: 1px solid #888; border-radius: 3px; padding: 2px 0 0 4px; overflow: hidden; }

.vscroll { width: 16px; flex: none; display: flex; flex-direction: column; background: #efefef; }
.sb-btn { width: 15px; height: 15px; flex: none; display: flex; align-items: center; justify-content: center; background: #d4d0c8; box-sizing: border-box; border: 1px solid; border-color: #fff #404040 #404040 #fff; }
.vscroll .sb-btn:first-child { margin-top: 1px; }
.sb-thumb { margin-top: 57px; width: 15px; height: 165px; flex: none; box-sizing: border-box; background: #d0d0d0; border: 1px solid; border-color: #f4f4f4 #505868 #505868 #f4f4f4; }
.sb-end { margin-top: auto; }
.tri-up { border-top: 0; border-bottom: 4px solid #111; }
.tri-left { border: 3px solid transparent; border-left: 0; border-right: 4px solid #111; }
.tri-right { border: 3px solid transparent; border-right: 0; border-left: 4px solid #111; }
.hscroll { height: 15px; flex: none; display: flex; padding-left: 1px; }
.hs-thumb { width: 708px; margin-left: 1px; box-sizing: border-box; background: #d0d0d0; border: 1px solid; border-color: #f4f4f4 #505868 #505868 #f4f4f4; }
.hs-track { flex: 1; background: #efefef; }
.corner { width: 17px; background: #d4d0c8; }

.status { height: 21px; flex: none; margin-top: 3px; display: flex; align-items: stretch; gap: 2px; padding-left: 1px; font-size: 11.500px; }
.status > div { box-sizing: border-box; border: 1px solid; border-color: #808080 #fff #fff #808080; display: flex; align-items: center; white-space: nowrap; }
.st-main { width: 487px; padding-left: 0; letter-spacing: -0.150px; }
.st-cell { width: 22px; }
.st-zone { width: 249px; gap: 3px; padding-left: 2px; letter-spacing: -0.200px; }
.st-lock { width: 33px; padding-left: 1px; gap: 4px; }
.st-zoom { flex: 1; padding-left: 2px; gap: 4px; position: relative; }
.st-zoom .tri { margin-left: 13px; }
.st-grip { position: absolute; right: 0; bottom: 0; width: 12px; height: 12px; background: repeating-linear-gradient(135deg, transparent 0 2px, #888 2px 3px, #fff 3px 4px); clip-path: polygon(100% 0, 100% 100%, 0 100%); }
</style>

<style>
html, body { margin: 0; padding: 0; background: #d4d0c8; }
</style>
